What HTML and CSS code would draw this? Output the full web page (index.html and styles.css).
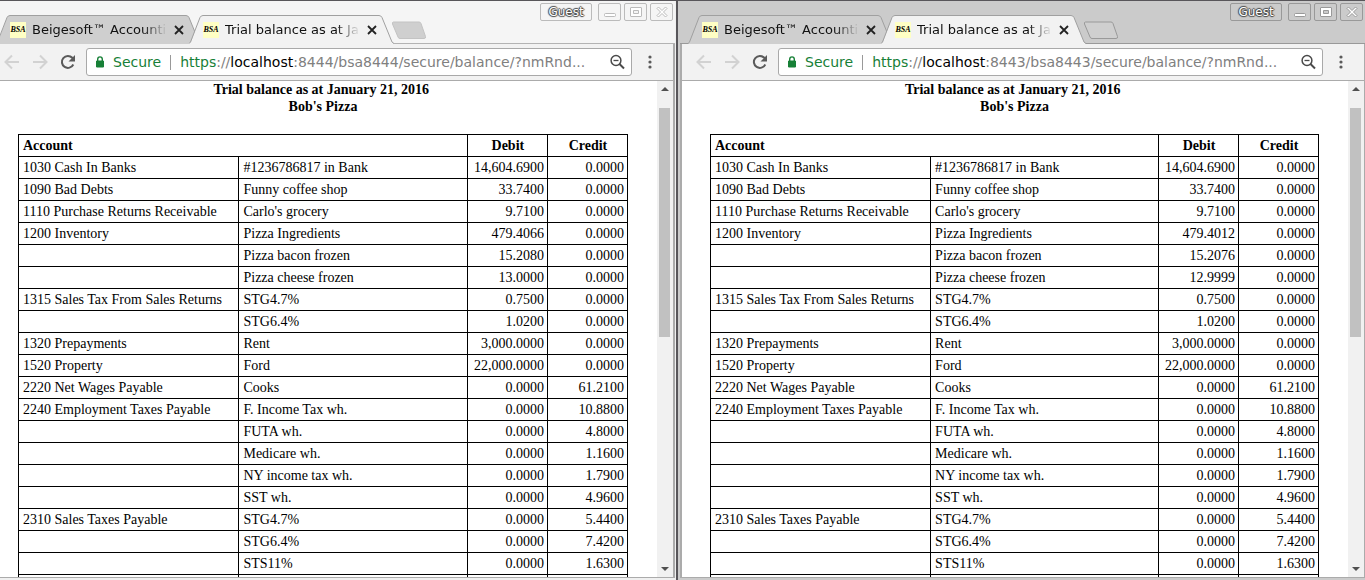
FILE: index.html
```html
<!DOCTYPE html>
<html lang="en">
<head>
<meta charset="utf-8">
<title>Trial balance as at January 21, 2016</title>
<link rel="stylesheet" href="styles.css">
</head>
<body>
<svg class="sprite" aria-hidden="true">
  <symbol id="tab" viewBox="0 0 206 29"><path class="tab-fill" d="M0 29L2 27L11 2.500Q12 .5 14 .5H190Q192 .5 193 2.500L203 27L205 29Z"/><path class="tab-line" d="M0 28.500L1.500 27L11 2.500Q12 .5 14 .5H190Q192 .5 193 2.500L203 27L205 28.500"/></symbol>
  <symbol id="x" viewBox="0 0 10 10"><path d="M1 1l8 8M9 1L1 9" fill="none" stroke="currentColor" stroke-width="1.800"/></symbol>
  <symbol id="newtab" viewBox="0 0 36 19"><path d="M2.500 1H28Q29.500 1 30 2.500L34.500 15.500Q35 17.500 33 17.500H9Q7.500 17.500 7 16L1.500 3Q1 1 2.500 1Z"/></symbol>
  <symbol id="back" viewBox="0 0 16 16"><path d="M15 8H2M8 1.500L1.500 8L8 14.500" fill="none" stroke="currentColor" stroke-width="2"/></symbol>
  <symbol id="fwd" viewBox="0 0 16 16"><path d="M1 8H14M8 1.500L14.500 8L8 14.500" fill="none" stroke="currentColor" stroke-width="2"/></symbol>
  <symbol id="reload" viewBox="0 0 16 16"><path d="M13.300 10.500A6 6 0 1 1 12.300 3.800L13.500 5" fill="none" stroke="currentColor" stroke-width="2"/><path d="M15 1V7.500H8.500Z" fill="currentColor"/></symbol>
  <symbol id="lock" viewBox="0 0 10 12"><path d="M1.500 5H8.500V11H1.500Z" fill="currentColor" stroke="currentColor" stroke-linejoin="round"/><path d="M2.700 5V3.200a2.300 2.300 0 0 1 4.600 0V5" fill="none" stroke="currentColor" stroke-width="1.400"/></symbol>
  <symbol id="zoomout" viewBox="0 0 16 16"><circle cx="7" cy="6.500" r="4.900" fill="none" stroke="currentColor" stroke-width="1.500"/><path d="M4.500 6.500H9.500" stroke="currentColor" stroke-width="1.300"/><path d="M10.500 10l4.500 4.500" stroke="currentColor" stroke-width="2"/></symbol>
  <symbol id="dots" viewBox="0 0 4 16"><circle cx="2" cy="3" r="1.600"/><circle cx="2" cy="8" r="1.600"/><circle cx="2" cy="13" r="1.600"/></symbol>
  <symbol id="min" viewBox="0 0 14 14"><rect x="1.500" y="8.500" width="11" height="3" rx="1"/></symbol>
  <symbol id="max" viewBox="0 0 14 14"><path fill-rule="evenodd" d="M2 2.500H12Q12.500 2.500 12.500 3V11Q12.500 11.500 12 11.500H2Q1.500 11.500 1.500 11V3Q1.500 2.500 2 2.500ZM4.500 5.500V8.500H9.500V5.500Z"/></symbol>
  <symbol id="cls" viewBox="0 0 14 14"><path d="M2 3.500L3.500 2L7 5.500L10.500 2L12 3.500L8.500 7L12 10.500L10.500 12L7 8.500L3.500 12L2 10.500L5.500 7Z"/></symbol>
  <symbol id="up" viewBox="0 0 8 4"><path d="M0 4L4 0L8 4Z"/></symbol>
  <symbol id="down" viewBox="0 0 8 4"><path d="M0 0L4 4L8 0Z"/></symbol>
</svg>
<main class="desktop">
<section class="window inactive">
  <header class="titlebar">
    <nav class="tabs">
      <div class="tab"><svg class="tab-shape"><use href="#tab"/></svg><span class="favicon">BSA</span><a class="tab-title" href="#">Beigesoft™ Accounti</a><button class="tab-close" aria-label="Close tab"><svg><use href="#x"/></svg></button></div>
      <div class="tab current"><svg class="tab-shape"><use href="#tab"/></svg><span class="favicon">BSA</span><a class="tab-title" href="#">Trial balance as at Ja</a><button class="tab-close" aria-label="Close tab"><svg><use href="#x"/></svg></button></div>
      <button class="new-tab" aria-label="New tab"><svg><use href="#newtab"/></svg></button>
    </nav>
    <div class="controls"><button class="guest">Guest</button><button aria-label="Minimize"><svg><use href="#min"/></svg></button><button aria-label="Maximize"><svg><use href="#max"/></svg></button><button aria-label="Close"><svg><use href="#cls"/></svg></button></div>
  </header>
  <div class="toolbar">
    <button class="nav" disabled aria-label="Back"><svg><use href="#back"/></svg></button>
    <button class="nav" disabled aria-label="Forward"><svg><use href="#fwd"/></svg></button>
    <button class="nav" aria-label="Reload"><svg><use href="#reload"/></svg></button>
    <div class="address"><svg class="lock"><use href="#lock"/></svg><span class="secure">Secure</span><span class="url"><span class="scheme">https</span>://<span class="host">localhost</span>:8444/bsa8444/secure/balance/?nmRnd...</span><button class="zoom" aria-label="Zoom"><svg><use href="#zoomout"/></svg></button></div>
    <button class="menu" aria-label="Menu"><svg><use href="#dots"/></svg></button>
  </div>
  <div class="viewport">
    <article class="report">
      <h1>Trial balance as at January 21, 2016&nbsp;<br>Bob's Pizza</h1>
      <table>
        <colgroup><col class="c-account"><col class="c-sub"><col class="c-sum"><col class="c-sum"></colgroup>
        <thead><tr><th class="left" colspan="2">Account</th><th>Debit</th><th>Credit</th></tr></thead>
        <tbody>
        <tr><td>1030 Cash In Banks</td><td>#1236786817 in Bank</td><td>14,604.6900</td><td>0.0000</td></tr>
        <tr><td>1090 Bad Debts</td><td>Funny coffee shop</td><td>33.7400</td><td>0.0000</td></tr>
        <tr><td>1110 Purchase Returns Receivable</td><td>Carlo's grocery</td><td>9.7100</td><td>0.0000</td></tr>
        <tr><td>1200 Inventory</td><td>Pizza Ingredients</td><td>479.4066</td><td>0.0000</td></tr>
        <tr><td></td><td>Pizza bacon frozen</td><td>15.2080</td><td>0.0000</td></tr>
        <tr><td></td><td>Pizza cheese frozen</td><td>13.0000</td><td>0.0000</td></tr>
        <tr><td>1315 Sales Tax From Sales Returns</td><td>STG4.7%</td><td>0.7500</td><td>0.0000</td></tr>
        <tr><td></td><td>STG6.4%</td><td>1.0200</td><td>0.0000</td></tr>
        <tr><td>1320 Prepayments</td><td>Rent</td><td>3,000.0000</td><td>0.0000</td></tr>
        <tr><td>1520 Property</td><td>Ford</td><td>22,000.0000</td><td>0.0000</td></tr>
        <tr><td>2220 Net Wages Payable</td><td>Cooks</td><td>0.0000</td><td>61.2100</td></tr>
        <tr><td>2240 Employment Taxes Payable</td><td>F. Income Tax wh.</td><td>0.0000</td><td>10.8800</td></tr>
        <tr><td></td><td>FUTA wh.</td><td>0.0000</td><td>4.8000</td></tr>
        <tr><td></td><td>Medicare wh.</td><td>0.0000</td><td>1.1600</td></tr>
        <tr><td></td><td>NY income tax wh.</td><td>0.0000</td><td>1.7900</td></tr>
        <tr><td></td><td>SST wh.</td><td>0.0000</td><td>4.9600</td></tr>
        <tr><td>2310 Sales Taxes Payable</td><td>STG4.7%</td><td>0.0000</td><td>5.4400</td></tr>
        <tr><td></td><td>STG6.4%</td><td>0.0000</td><td>7.4200</td></tr>
        <tr><td></td><td>STS11%</td><td>0.0000</td><td>1.6300</td></tr>
        <tr><td></td><td></td><td></td><td></td></tr>
        </tbody>
      </table>
    </article>
    <div class="scrollbar"><button aria-label="Scroll up"><svg><use href="#up"/></svg></button><div class="track"><div class="thumb"></div></div><button aria-label="Scroll down"><svg><use href="#down"/></svg></button></div>
  </div>
</section>
<section class="window active">
  <header class="titlebar">
    <nav class="tabs">
      <div class="tab"><svg class="tab-shape"><use href="#tab"/></svg><span class="favicon">BSA</span><a class="tab-title" href="#">Beigesoft™ Accounti</a><button class="tab-close" aria-label="Close tab"><svg><use href="#x"/></svg></button></div>
      <div class="tab current"><svg class="tab-shape"><use href="#tab"/></svg><span class="favicon">BSA</span><a class="tab-title" href="#">Trial balance as at Ja</a><button class="tab-close" aria-label="Close tab"><svg><use href="#x"/></svg></button></div>
      <button class="new-tab" aria-label="New tab"><svg><use href="#newtab"/></svg></button>
    </nav>
    <div class="controls"><button class="guest">Guest</button><button aria-label="Minimize"><svg><use href="#min"/></svg></button><button aria-label="Maximize"><svg><use href="#max"/></svg></button><button aria-label="Close"><svg><use href="#cls"/></svg></button></div>
  </header>
  <div class="toolbar">
    <button class="nav" disabled aria-label="Back"><svg><use href="#back"/></svg></button>
    <button class="nav" disabled aria-label="Forward"><svg><use href="#fwd"/></svg></button>
    <button class="nav" aria-label="Reload"><svg><use href="#reload"/></svg></button>
    <div class="address"><svg class="lock"><use href="#lock"/></svg><span class="secure">Secure</span><span class="url"><span class="scheme">https</span>://<span class="host">localhost</span>:8443/bsa8443/secure/balance/?nmRnd...</span><button class="zoom" aria-label="Zoom"><svg><use href="#zoomout"/></svg></button></div>
    <button class="menu" aria-label="Menu"><svg><use href="#dots"/></svg></button>
  </div>
  <div class="viewport">
    <article class="report">
      <h1>Trial balance as at January 21, 2016&nbsp;<br>Bob's Pizza</h1>
      <table>
        <colgroup><col class="c-account"><col class="c-sub"><col class="c-sum"><col class="c-sum"></colgroup>
        <thead><tr><th class="left" colspan="2">Account</th><th>Debit</th><th>Credit</th></tr></thead>
        <tbody>
        <tr><td>1030 Cash In Banks</td><td>#1236786817 in Bank</td><td>14,604.6900</td><td>0.0000</td></tr>
        <tr><td>1090 Bad Debts</td><td>Funny coffee shop</td><td>33.7400</td><td>0.0000</td></tr>
        <tr><td>1110 Purchase Returns Receivable</td><td>Carlo's grocery</td><td>9.7100</td><td>0.0000</td></tr>
        <tr><td>1200 Inventory</td><td>Pizza Ingredients</td><td>479.4012</td><td>0.0000</td></tr>
        <tr><td></td><td>Pizza bacon frozen</td><td>15.2076</td><td>0.0000</td></tr>
        <tr><td></td><td>Pizza cheese frozen</td><td>12.9999</td><td>0.0000</td></tr>
        <tr><td>1315 Sales Tax From Sales Returns</td><td>STG4.7%</td><td>0.7500</td><td>0.0000</td></tr>
        <tr><td></td><td>STG6.4%</td><td>1.0200</td><td>0.0000</td></tr>
        <tr><td>1320 Prepayments</td><td>Rent</td><td>3,000.0000</td><td>0.0000</td></tr>
        <tr><td>1520 Property</td><td>Ford</td><td>22,000.0000</td><td>0.0000</td></tr>
        <tr><td>2220 Net Wages Payable</td><td>Cooks</td><td>0.0000</td><td>61.2100</td></tr>
        <tr><td>2240 Employment Taxes Payable</td><td>F. Income Tax wh.</td><td>0.0000</td><td>10.8800</td></tr>
        <tr><td></td><td>FUTA wh.</td><td>0.0000</td><td>4.8000</td></tr>
        <tr><td></td><td>Medicare wh.</td><td>0.0000</td><td>1.1600</td></tr>
        <tr><td></td><td>NY income tax wh.</td><td>0.0000</td><td>1.7900</td></tr>
        <tr><td></td><td>SST wh.</td><td>0.0000</td><td>4.9600</td></tr>
        <tr><td>2310 Sales Taxes Payable</td><td>STG4.7%</td><td>0.0000</td><td>5.4400</td></tr>
        <tr><td></td><td>STG6.4%</td><td>0.0000</td><td>7.4200</td></tr>
        <tr><td></td><td>STS11%</td><td>0.0000</td><td>1.6300</td></tr>
        <tr><td></td><td></td><td></td><td></td></tr>
        </tbody>
      </table>
    </article>
    <div class="scrollbar"><button aria-label="Scroll up"><svg><use href="#up"/></svg></button><div class="track"><div class="thumb"></div></div><button aria-label="Scroll down"><svg><use href="#down"/></svg></button></div>
  </div>
</section>
</main>
</body>
</html>
```

FILE: styles.css
```css
* { box-sizing: border-box; }
body { margin: 0; overflow: hidden; font-family: "DejaVu Sans", sans-serif; color: #000; }
.sprite { position: absolute; width: 0; height: 0; }
button { margin: 0; padding: 0; border: 0; background: none; font: inherit; color: inherit; display: flex; align-items: center; justify-content: center; }
svg { display: block; }

/* the first window hangs slightly off the left side of the desktop */
.desktop { display: flex; height: 100vh; margin-left: -11px; gap: 2px; background: #58565a; border-top: 1px solid #58565a; }
.window { flex: 1 1 0; min-width: 0; display: flex; flex-direction: column; padding-bottom: 2px; }
.inactive { --bar: #f5f5f5; --line: #b3b3b3; --knob: #fff; --knob-line: #bbb; --plus: #cfcfcf; --plus-line: #c3c3c3; background: #f0f0f0; padding-left: 1px; padding-right: 1px; }
.active { --bar: #cbcbcb; --line: #999; --knob: #fff; --knob-line: #999; --plus: #cfcfcf; --plus-line: #999; background: #cbcbcb; padding-left: 2px; }

.titlebar { display: flex; justify-content: space-between; align-items: flex-start; height: 43px; background: var(--bar); box-shadow: inset 0 -1px var(--line); padding-right: 2px; }
.tabs { display: flex; align-items: flex-start; padding: 14px 0 0 6px; }
.active .tabs { padding-left: 8px; }
.tab { position: relative; z-index: 0; display: flex; align-items: center; width: 206px; height: 29px; padding: 0 18px 0 14px; margin-right: -13px; }
.current { z-index: 1; }
.tab-shape { position: absolute; z-index: -1; left: 0; top: 0; width: 206px; height: 29px; fill: #cfcfcf; stroke: none; }
.tab-line { fill: none; stroke: #a0a0a0; }
.current .tab-shape { fill: #f2f2f2; }
.favicon { width: 16px; height: 16px; background: #ffffc4; font: italic bold 8px/16px "Liberation Serif", serif; text-align: center; }
.tab-title { flex: 1; min-width: 0; margin-left: 6px; font-size: 13px; line-height: 20px; color: #111; text-decoration: none; white-space: nowrap; -webkit-mask-image: linear-gradient(to left, transparent, #000 24px); mask-image: linear-gradient(to left, transparent, #000 24px); }
.tab-close { width: 10px; height: 10px; margin-left: 7px; color: #222; }
.tab-close svg { width: 10px; height: 10px; }
.new-tab { margin: 6px 0 0 9px; }
.new-tab svg { width: 36px; height: 19px; fill: var(--plus); stroke: var(--plus-line); }

.controls { display: flex; gap: 3px; padding-top: 2px; }
.controls button { width: 23px; height: 18px; border: 1px solid var(--knob-line); border-radius: 2px; }
.controls svg { width: 14px; height: 14px; fill: var(--knob); stroke: var(--knob-line); }
.controls .guest { width: 52px; margin-right: 3px; font-size: 12px; line-height: 16px; color: #fff; text-shadow: 1px 0 1px #444, -1px 0 1px #444, 0 1px 1px #444, 0 -1px 1px #444; }

.toolbar { display: flex; align-items: center; height: 37px; background: #f2f2f2; border: 0 solid #ababab; border-bottom-width: 1px; border-right-width: 2px; padding-left: 14px; }
.active .toolbar, .active .viewport { border-left-width: 2px; border-right-width: 1px; }
.nav { width: 16px; height: 16px; margin-right: 12px; color: #5a5a5a; }
.nav:nth-child(3) { margin-right: 10px; }
.nav svg { width: 16px; height: 16px; }
.nav:disabled { color: #d2d2d2; }
.address { flex: 1; min-width: 0; display: flex; align-items: center; height: 28px; padding: 0 6px 0 8px; border: 1px solid #a9a9a9; border-radius: 3px; background: #fff; font-size: 14px; line-height: 20px; white-space: nowrap; }
.lock { width: 10px; height: 12px; color: #178037; }
.secure { margin-left: 8px; padding-right: 9px; line-height: 15px; color: #178037; border-right: 1px solid #999; }
.url { flex: 1; min-width: 0; overflow: hidden; margin-left: 9px; color: #808080; }
.scheme { color: #178037; }
.host { color: #000; }
.zoom svg { width: 16px; height: 16px; color: #4a4a4a; }
.menu { width: 41px; padding-right: 5px; }
.menu svg { width: 4px; height: 16px; fill: #5a5a5a; }

.viewport { flex: 1; min-height: 0; display: flex; overflow: hidden; background: #fff; border: 0 solid #ababab; border-right-width: 2px; border-bottom-width: 1px; }
.report { flex: 1; min-width: 0; padding: 0 29px 0 28px; font: 14px/17px "Liberation Serif", serif; }
.report h1 { margin: 0 0 19px; font-size: 14px; line-height: 17px; text-align: center; }
table { width: 100%; table-layout: fixed; border-collapse: collapse; }
.c-account { width: 36.200%; }
.c-sub { width: 37.500%; }
th, td { height: 22px; padding: 2px 3px 2px 4px; border: 1px solid #000; white-space: nowrap; }
.left { text-align: left; }
td:nth-child(n+3) { text-align: right; }

.scrollbar { flex: none; width: 16px; display: flex; flex-direction: column; background: #f1f1f1; }
.scrollbar button { height: 16px; }
.scrollbar button svg { width: 8px; height: 4px; fill: #505050; }
.track { flex: 1; padding: 11px 3px 0 2px; }
.thumb { height: 50.500%; background: #c1c1c1; }
```
